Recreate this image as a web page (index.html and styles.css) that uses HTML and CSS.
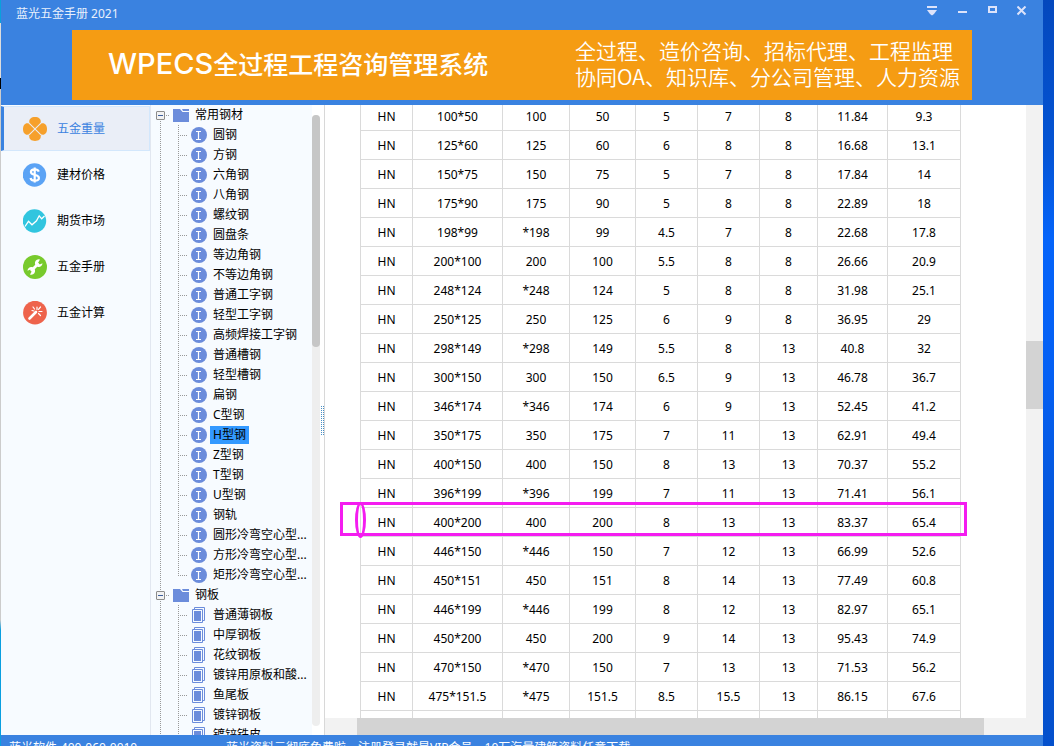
FILE: index.html
```html
<!DOCTYPE html>
<html lang="zh-CN">
<head>
<meta charset="utf-8">
<title>蓝光五金手册 2021</title>
<link rel="stylesheet" href="styles.css">
</head>
<body>
<svg class="defs" aria-hidden="true">
  <symbol id="beam" viewBox="0 0 16 16"><circle cx="8" cy="8" r="8" fill="#6b8cdb"/><path d="M5 4.500h5M5 12.500h5M7.500 4.500v8" stroke="#fff" stroke-width="1.200" fill="none"/></symbol>
  <symbol id="sheet" viewBox="0 0 16 16"><path d="M3.500 2V.5h10v13H12M1.500 2.500h10v13h-10z" fill="none" stroke="#6b8cdb"/><path d="M3 4h7v10H3z" fill="#6b8cdb"/></symbol>
  <symbol id="folder" viewBox="0 0 16 13"><path d="M0 0h7l2.500 3H16v10H0z" fill="#6b8cdb"/><path d="M9 0h7v2h-6z" fill="#6b8cdb"/></symbol>
</svg>
<div class="desktop">
<div class="window">
  <header class="header">
    <div class="titlebar">
      <h1 class="title">蓝光五金手册 2021</h1>
      <div class="controls">
        <button aria-label="菜单"><svg viewBox="0 0 10 10"><path d="M0 0h10v2H0zM0 4h10L7 8 5 9.500 3 8z"/></svg></button>
        <button aria-label="最小化"><svg viewBox="0 0 10 10"><path d="M1 5h9v2H1z"/></svg></button>
        <button aria-label="最大化"><svg viewBox="0 0 10 10"><path fill-rule="evenodd" d="M1 0h9v7H1zM3 2v3h5V2z"/></svg></button>
        <button aria-label="关闭"><svg viewBox="0 0 10 10"><path d="M.5 .5l8 8M8.500 .5l-8 8" stroke="#dde3fa" stroke-width="2"/></svg></button>
      </div>
    </div>
    <a class="banner" href="#banner">
      <strong class="banner-name"><span class="latin">WPECS</span>全过程工程咨询管理系统</strong>
      <span class="banner-text">全过程、造价咨询、招标代理、工程监理<br>协同OA、知识库、分公司管理、人力资源</span>
    </a>
  </header>

  <main class="main">
    <nav class="nav">
      <a class="nav-item active" href="#weight"><svg viewBox="0 0 24 24"><g fill="#f6a02b"><path id="petal" d="M12 11.300L6.400 5.700C5.500 2 8.500 0 12 0s6.500 2 5.600 5.700z"/><use href="#petal" transform="rotate(90 12 12)"/><use href="#petal" transform="rotate(180 12 12)"/><use href="#petal" transform="rotate(270 12 12)"/></g></svg>五金重量</a>
      <a class="nav-item" href="#price"><svg viewBox="0 0 24 24"><circle cx="11.500" cy="12" r="11.700" fill="#5ba3f5"/><path d="M15.800 8.600C15.200 7 13.700 6.400 11.700 6.400c-2.300 0-3.800 1-3.800 2.700 0 4.200 8 1.500 8 5.800 0 1.700-1.700 2.700-4.100 2.700-2.300 0-3.900-.9-4.300-2.700M11.700 4.500v15" fill="none" stroke="#fff" stroke-width="2.200"/></svg>建材价格</a>
      <a class="nav-item" href="#futures"><svg viewBox="0 0 24 24"><circle cx="11.500" cy="12" r="11.700" fill="#31c5df"/><path d="M2 17.500l3.500-5.200 3.500 3.500 4.500-4 2.700-5 2.500 3L21.500 7" fill="none" stroke="#fff" stroke-width="1.300"/></svg>期货市场</a>
      <a class="nav-item" href="#manual"><svg viewBox="0 0 24 24"><circle cx="12" cy="12" r="12" fill="#78ca2d"/><path d="M8 16l7.500-7.500" stroke="#fff" stroke-width="2.800"/><path d="M17 4.600a3.800 3.800 0 1 0 2.500 3.600l-2.800 1.200-1.600-1.600zM7 19.400a3.800 3.800 0 1 0-2.500-3.600l2.800-1.200 1.600 1.600z" fill="#fff"/></svg>五金手册</a>
      <a class="nav-item" href="#calc"><svg viewBox="0 0 24 24"><circle cx="12" cy="11.700" r="11.900" fill="#ee634c"/><path d="M6.500 17.500L13 11" stroke="#fff" stroke-width="2.600" stroke-linecap="round"/><path d="M14 6V8.500M10 6l1.500 2M17.500 6l-2 2.300M16 10.500h3M15.500 12.500l2 2M9 9.500l2 .5" stroke="#fff" stroke-width="1.200" stroke-linecap="round"/></svg>五金计算</a>
    </nav>

    <aside class="tree-pane">
      <ul class="tree">
        <li class="branch">
          <div class="branch-row"><button class="toggle" aria-label="折叠"></button><svg class="folder"><use href="#folder"/></svg><a href="#g1">常用钢材</a></div>
          <ul class="leaves">
            <li><svg><use href="#beam"/></svg><a href="#n1">圆钢</a></li>
            <li><svg><use href="#beam"/></svg><a href="#n2">方钢</a></li>
            <li><svg><use href="#beam"/></svg><a href="#n3">六角钢</a></li>
            <li><svg><use href="#beam"/></svg><a href="#n4">八角钢</a></li>
            <li><svg><use href="#beam"/></svg><a href="#n5">螺纹钢</a></li>
            <li><svg><use href="#beam"/></svg><a href="#n6">圆盘条</a></li>
            <li><svg><use href="#beam"/></svg><a href="#n7">等边角钢</a></li>
            <li><svg><use href="#beam"/></svg><a href="#n8">不等边角钢</a></li>
            <li><svg><use href="#beam"/></svg><a href="#n9">普通工字钢</a></li>
            <li><svg><use href="#beam"/></svg><a href="#n10">轻型工字钢</a></li>
            <li><svg><use href="#beam"/></svg><a href="#n11">高频焊接工字钢</a></li>
            <li><svg><use href="#beam"/></svg><a href="#n12">普通槽钢</a></li>
            <li><svg><use href="#beam"/></svg><a href="#n13">轻型槽钢</a></li>
            <li><svg><use href="#beam"/></svg><a href="#n14">扁钢</a></li>
            <li><svg><use href="#beam"/></svg><a href="#n15">C型钢</a></li>
            <li><svg><use href="#beam"/></svg><a class="selected" href="#n16">H型钢</a></li>
            <li><svg><use href="#beam"/></svg><a href="#n17">Z型钢</a></li>
            <li><svg><use href="#beam"/></svg><a href="#n18">T型钢</a></li>
            <li><svg><use href="#beam"/></svg><a href="#n19">U型钢</a></li>
            <li><svg><use href="#beam"/></svg><a href="#n20">钢轨</a></li>
            <li><svg><use href="#beam"/></svg><a href="#n21">圆形冷弯空心型...</a></li>
            <li><svg><use href="#beam"/></svg><a href="#n22">方形冷弯空心型...</a></li>
            <li><svg><use href="#beam"/></svg><a href="#n23">矩形冷弯空心型...</a></li>
          </ul>
        </li>
        <li class="branch">
          <div class="branch-row"><button class="toggle" aria-label="折叠"></button><svg class="folder"><use href="#folder"/></svg><a href="#g2">钢板</a></div>
          <ul class="leaves">
            <li><svg><use href="#sheet"/></svg><a href="#p1">普通薄钢板</a></li>
            <li><svg><use href="#sheet"/></svg><a href="#p2">中厚钢板</a></li>
            <li><svg><use href="#sheet"/></svg><a href="#p3">花纹钢板</a></li>
            <li><svg><use href="#sheet"/></svg><a href="#p4">镀锌用原板和酸...</a></li>
            <li><svg><use href="#sheet"/></svg><a href="#p5">鱼尾板</a></li>
            <li><svg><use href="#sheet"/></svg><a href="#p6">镀锌钢板</a></li>
            <li><svg><use href="#sheet"/></svg><a href="#p7">镀锌铁皮</a></li>
          </ul>
        </li>
      </ul>
      <div class="tree-scroll"><div class="tree-thumb"></div></div>
      <div class="splitter"></div>
    </aside>

    <section class="viewer">
      <div class="sheet-area">
        <div class="sheet">
          <table class="data">
            <colgroup><col class="w52"><col class="w90"><col class="w67"><col class="w66"><col class="w62"><col class="w62"><col class="w58"><col class="w70"><col class="w73"></colgroup>
            <tbody>
            <tr><td>HN</td><td>100*50</td><td>100</td><td>50</td><td>5</td><td>7</td><td>8</td><td>11.84</td><td>9.3</td></tr>
            <tr><td>HN</td><td>125*60</td><td>125</td><td>60</td><td>6</td><td>8</td><td>8</td><td>16.68</td><td>13.1</td></tr>
            <tr><td>HN</td><td>150*75</td><td>150</td><td>75</td><td>5</td><td>7</td><td>8</td><td>17.84</td><td>14</td></tr>
            <tr><td>HN</td><td>175*90</td><td>175</td><td>90</td><td>5</td><td>8</td><td>8</td><td>22.89</td><td>18</td></tr>
            <tr><td>HN</td><td>198*99</td><td>*198</td><td>99</td><td>4.5</td><td>7</td><td>8</td><td>22.68</td><td>17.8</td></tr>
            <tr><td>HN</td><td>200*100</td><td>200</td><td>100</td><td>5.5</td><td>8</td><td>8</td><td>26.66</td><td>20.9</td></tr>
            <tr><td>HN</td><td>248*124</td><td>*248</td><td>124</td><td>5</td><td>8</td><td>8</td><td>31.98</td><td>25.1</td></tr>
            <tr><td>HN</td><td>250*125</td><td>250</td><td>125</td><td>6</td><td>9</td><td>8</td><td>36.95</td><td>29</td></tr>
            <tr><td>HN</td><td>298*149</td><td>*298</td><td>149</td><td>5.5</td><td>8</td><td>13</td><td>40.8</td><td>32</td></tr>
            <tr><td>HN</td><td>300*150</td><td>300</td><td>150</td><td>6.5</td><td>9</td><td>13</td><td>46.78</td><td>36.7</td></tr>
            <tr><td>HN</td><td>346*174</td><td>*346</td><td>174</td><td>6</td><td>9</td><td>13</td><td>52.45</td><td>41.2</td></tr>
            <tr><td>HN</td><td>350*175</td><td>350</td><td>175</td><td>7</td><td>11</td><td>13</td><td>62.91</td><td>49.4</td></tr>
            <tr><td>HN</td><td>400*150</td><td>400</td><td>150</td><td>8</td><td>13</td><td>13</td><td>70.37</td><td>55.2</td></tr>
            <tr><td>HN</td><td>396*199</td><td>*396</td><td>199</td><td>7</td><td>11</td><td>13</td><td>71.41</td><td>56.1</td></tr>
            <tr><td>HN</td><td>400*200</td><td>400</td><td>200</td><td>8</td><td>13</td><td>13</td><td>83.37</td><td>65.4</td></tr>
            <tr><td>HN</td><td>446*150</td><td>*446</td><td>150</td><td>7</td><td>12</td><td>13</td><td>66.99</td><td>52.6</td></tr>
            <tr><td>HN</td><td>450*151</td><td>450</td><td>151</td><td>8</td><td>14</td><td>13</td><td>77.49</td><td>60.8</td></tr>
            <tr><td>HN</td><td>446*199</td><td>*446</td><td>199</td><td>8</td><td>12</td><td>13</td><td>82.97</td><td>65.1</td></tr>
            <tr><td>HN</td><td>450*200</td><td>450</td><td>200</td><td>9</td><td>14</td><td>13</td><td>95.43</td><td>74.9</td></tr>
            <tr><td>HN</td><td>470*150</td><td>*470</td><td>150</td><td>7</td><td>13</td><td>13</td><td>71.53</td><td>56.2</td></tr>
            <tr><td>HN</td><td>475*151.5</td><td>*475</td><td>151.5</td><td>8.5</td><td>15.5</td><td>13</td><td>86.15</td><td>67.6</td></tr>
            <tr><td></td><td></td><td></td><td></td><td></td><td></td><td></td><td></td><td></td></tr>
            </tbody>
          </table>
          <div class="mark-box"></div>
          <div class="mark-oval"></div>
        </div>
      </div>
      <div class="vscroll"><div class="vthumb"></div></div>
      <div class="hscroll"><div class="hthumb"></div></div>
    </section>
  </main>

  <footer class="footer"><span class="phone">蓝光软件-400-060-0010</span><span>蓝光资料元彻底免费啦，注册登录就是VIP会员，10万海量建筑资料任意下载</span></footer>
</div>
</div>
</body>
</html>
```
FILE: styles.css
```css
* { box-sizing: border-box; }

body {
  margin: 0;
  font: 12px/20px "Noto Sans", "Noto Sans CJK SC", sans-serif;
  color: #000;
}

a { color: inherit; text-decoration: none; }
ul { list-style: none; margin: 0; padding: 0; }
button { border: 0; padding: 0; background: none; }
.defs { position: absolute; width: 0; height: 0; }

.desktop {
  height: 100vh;
  overflow: hidden;
  padding: 0 11px 0 1px;
  background:
    linear-gradient(#0aa0dc 0 23px, #ddd 23px 78px, #000 78px 89px, #ccc 89px 620px, #0a9fe0 630px) left / 1px 100% no-repeat,
    linear-gradient(#0448bd, #0454d4 20%, #0564fa 32%, #0560f4 50%, #0556d8 70%, #0450cc);
}

.window {
  height: 100%;
  display: flex;
  flex-direction: column;
  background: #fff;
}

/* Header */
.header { flex: none; background: #3a82e0; padding-bottom: 5px; }
.titlebar {
  display: flex;
  justify-content: space-between;
  height: 30px;
  padding: 4px 16px 0 15px;
}
.title { margin: 0; font-size: 12px; font-weight: 400; color: #e8f0fc; }
.controls { display: flex; gap: 20px; padding-top: 2px; }
.controls button { width: 10px; height: 10px; }
.controls svg { display: block; width: 10px; height: 10px; fill: #dde3fa; }

.banner {
  display: flex;
  align-items: center;
  justify-content: space-between;
  height: 70px;
  margin: 0 71px;
  padding: 0 12px 4px 36px;
  background: #f59c13;
  color: #fff;
  white-space: nowrap;
}
.banner-name { font: 500 25px/38px "Noto Sans CJK SC", sans-serif; }
.latin { font: 500 29px/38px Inter, sans-serif; }
.banner-text { font: 350 21px/26px "Noto Sans CJK SC", sans-serif; }

/* Body */
.main { flex: 1; min-height: 0; display: flex; overflow: hidden; }

.nav {
  flex: none;
  display: flex;
  flex-direction: column;
  gap: 1px;
  width: 150px;
  padding-top: 1px;
  background: #f7fbff;
  border-right: 1px solid #e2e7f0;
}
.nav-item {
  display: flex;
  align-items: center;
  gap: 10px;
  height: 45px;
  padding-left: 22px;
}
.nav-item svg { width: 24px; height: 24px; }
.nav-item.active {
  border: 1px solid #d3e7fc;
  border-left: 3px solid #3a82e0;
  padding-left: 19px;
  background: #eaeef7;
  color: #3a82e0;
}

.tree-pane { flex: none; display: flex; width: 174px; overflow: hidden; border-right: 1px solid #d8d8d8; }
.tree { flex: 1; background: #f7fbff; overflow: hidden; white-space: nowrap; }
.branch {
  background: repeating-linear-gradient(#999 0 1px, transparent 1px 2px) 9px 10px / 1px 100% no-repeat;
}
.branch + .branch { background-position-y: 0; }
.branch-row { display: flex; align-items: center; height: 20px; padding-left: 5px; }
.branch-row a { margin-left: 6px; }
.toggle {
  width: 9px;
  height: 9px;
  border: 1px solid #8c8c8c;
  border-radius: 1px;
  background: linear-gradient(#3c5f9e, #3c5f9e) center / 5px 1px no-repeat, #f2f2f2;
}
.folder {
  width: 24px;
  height: 13px;
  padding-left: 8px;
  background: repeating-linear-gradient(90deg, #999 0 1px, transparent 1px 2px) 1px 6px / 4px 1px no-repeat;
}
.leaves { padding-left: 27px; }
.leaves li {
  display: flex;
  align-items: center;
  height: 20px;
  padding-left: 13px;
  background:
    repeating-linear-gradient(#999 0 1px, transparent 1px 2px) 0 0 / 1px 100% no-repeat,
    repeating-linear-gradient(90deg, #999 0 1px, transparent 1px 2px) 2px 10px / 8px 1px no-repeat;
}
.leaves li:last-child { background-size: 1px 11px, 8px 1px; }
.leaves svg { width: 16px; height: 16px; }
.leaves a { margin-left: 3px; padding: 0 3px; line-height: 18px; }
.leaves .selected { background: #3399ff; }

.tree-scroll { width: 8px; margin: 10px 0 9px; border-radius: 4px; background: #eee; }
.tree-thumb { height: 232px; border-radius: 4px; background: #c6c6c6; }
.splitter {
  width: 4px;
  height: 29px;
  align-self: center;
  background: conic-gradient(#4a8fc4 25%, transparent 0) 0 0 / 2px 2px;
}

/* Viewer */
.viewer {
  flex: 1;
  min-width: 0;
  display: grid;
  grid-template: minmax(0, 1fr) 17px / minmax(0, 1fr) 17px;
}
.sheet-area { overflow: hidden; padding-left: 35px; }
.sheet { position: relative; width: 601px; margin-top: -3px; }
.data { width: 601px; table-layout: fixed; border-spacing: 0; border-left: 1px solid #dadada; }
.data td {
  height: 29px;
  padding: 2px 0 0;
  border: solid #dadada;
  border-width: 0 1px 1px 0;
  text-align: center;
}
.w52 { width: 52px; }
.w58 { width: 58px; }
.w62 { width: 62px; }
.w66 { width: 66px; }
.w67 { width: 67px; }
.w70 { width: 70px; }
.w73 { width: 73px; }
.w90 { width: 90px; }

.mark-box {
  position: absolute;
  top: 400px;
  left: -20px;
  width: 627px;
  height: 34px;
  border: 3px solid #f41cf0;
}
.mark-oval {
  position: absolute;
  top: 400px;
  left: -5px;
  width: 11px;
  height: 36px;
  border: 3px solid #f41cf0;
  border-radius: 50%;
}

.vscroll { background: #f2f2f2; padding-top: 236px; }
.vthumb { height: 68px; background: #d3d3d3; }
.hscroll { grid-column: 1 / 3; background: #f2f2f2; padding: 0 59px 0 32px; }
.hthumb { height: 17px; background: #d3d3d3; }

.footer {
  flex: none;
  display: flex;
  height: 11px;
  padding: 3px 8px 0;
  overflow: hidden;
  background: #3a82e0;
  color: #fff;
  white-space: nowrap;
}
.phone { width: 217px; }
```
